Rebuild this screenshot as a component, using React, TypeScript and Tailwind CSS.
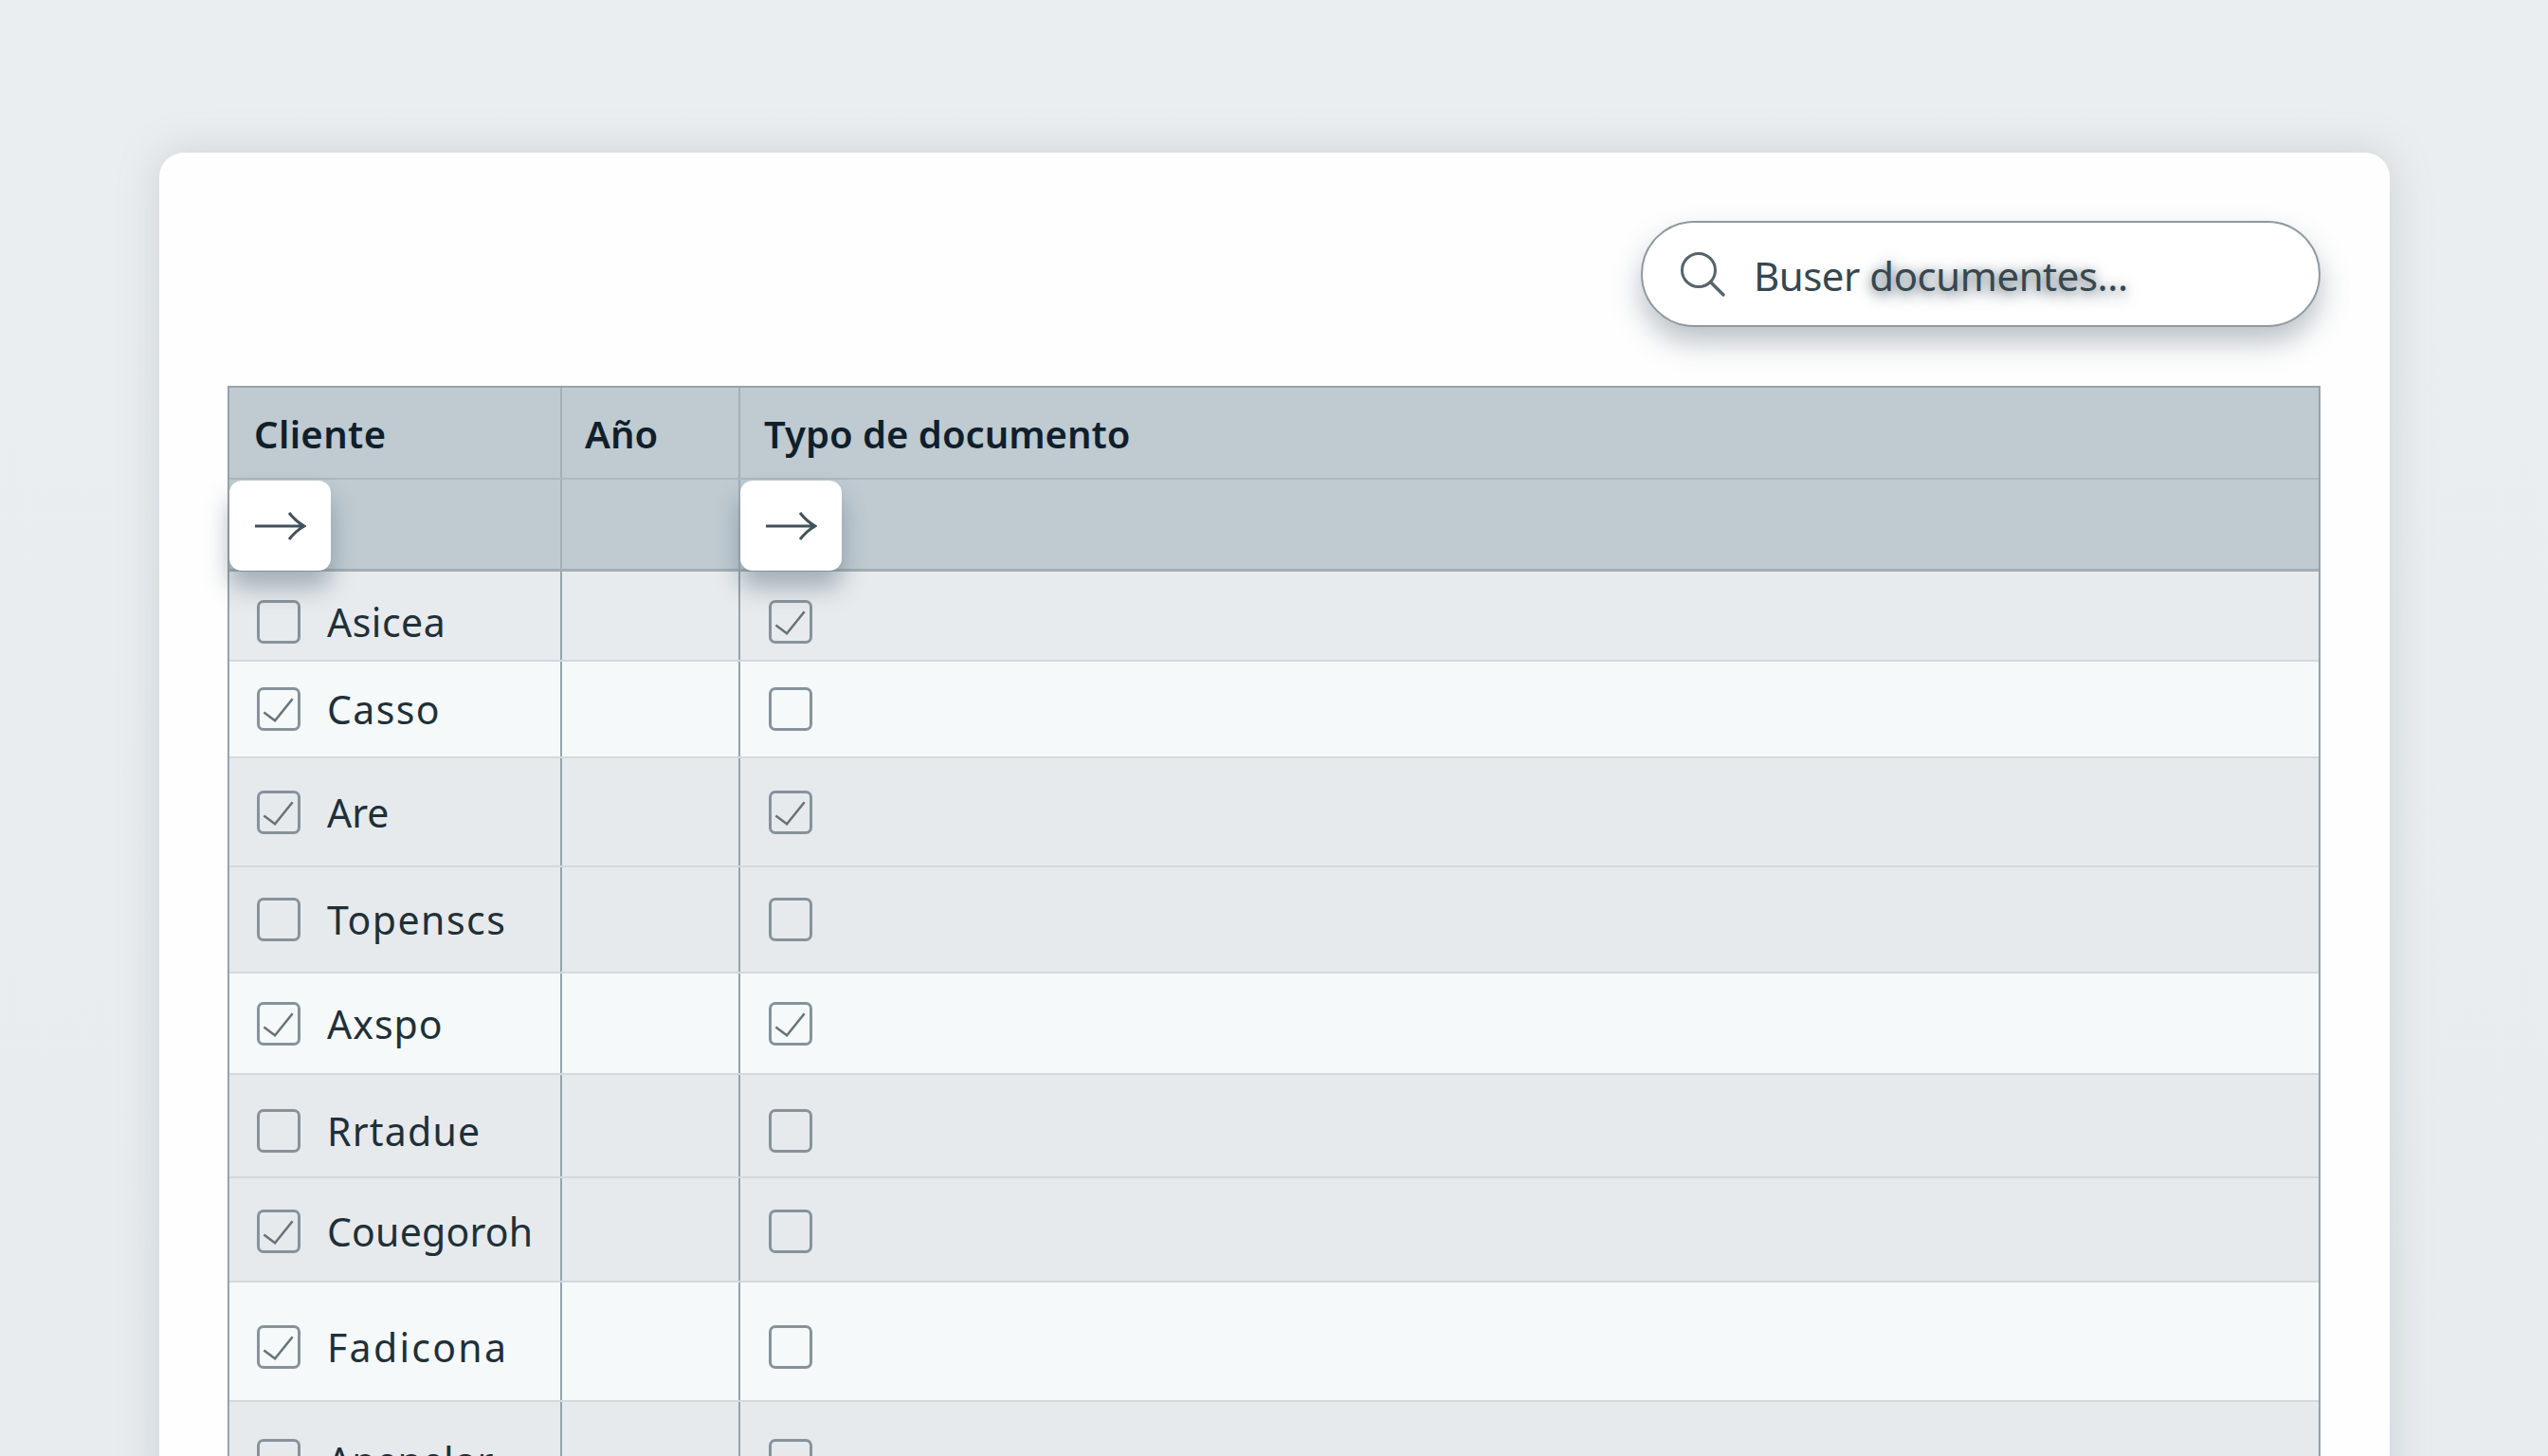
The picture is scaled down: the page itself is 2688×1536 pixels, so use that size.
import React from "react";

type Row = {
  name: string;
  left: boolean;
  right: boolean;
  height: string;
  tone: string;
  offset: string;
  spacing: string;
};

const rows: Row[] = [
  { name: "Asicea", left: false, right: true, height: "h-[95px]", tone: "bg-[#e7ebee]", offset: "pt-[12px]", spacing: "tracking-[0.5px]" },
  { name: "Casso", left: true, right: false, height: "h-[102px]", tone: "bg-[#f5f9fa]", offset: "", spacing: "tracking-[1.4px]" },
  { name: "Are", left: true, right: true, height: "h-[115px]", tone: "bg-[#e6eaed]", offset: "", spacing: "tracking-normal" },
  { name: "Topenscs", left: false, right: false, height: "h-[112px]", tone: "bg-[#e6eaed]", offset: "", spacing: "tracking-[1.5px]" },
  { name: "Axspo", left: true, right: true, height: "h-[107px]", tone: "bg-[#f5f9fa]", offset: "", spacing: "tracking-[1px]" },
  { name: "Rrtadue", left: false, right: false, height: "h-[109px]", tone: "bg-[#e6eaed]", offset: "pt-[10px]", spacing: "tracking-[1.2px]" },
  { name: "Couegoroh", left: true, right: false, height: "h-[110px]", tone: "bg-[#e6eaed]", offset: "pt-[4px]", spacing: "tracking-[0.2px]" },
  { name: "Fadicona", left: true, right: false, height: "h-[126px]", tone: "bg-[#f5f9fa]", offset: "pt-[12px]", spacing: "tracking-[2.3px]" },
  { name: "Apenelor", left: false, right: false, height: "h-[126px]", tone: "bg-[#e6eaed]", offset: "", spacing: "tracking-normal" },
];

const Checkbox = ({ checked }: { checked: boolean }) => (
  <span className="flex h-[46px] w-[46px] shrink-0 items-center justify-center rounded-[7px] border-[3px] border-[#87929a]">
    {checked && (
      <svg width="40" height="40" viewBox="0 0 41 41" fill="none" className="shrink-0">
        <path d="M4.5 24 L16.5 33 L35.5 9.5" stroke="#687379" strokeWidth="2.6" />
      </svg>
    )}
  </span>
);

const ArrowButton = () => (
  <div className="relative z-10 mt-px flex h-[95px] w-[107px] items-center justify-center rounded-[13px] bg-white shadow-[0_18px_26px_rgba(70,90,105,0.42)]">
    <svg width="54" height="30" viewBox="0 0 54 30" fill="none">
      <path d="M0 15 H52 M36 1 Q43 10 52 15 Q43 20 36 29" stroke="#42525a" strokeWidth="3" />
    </svg>
  </div>
);

export default function App() {
  return (
    <div className="h-[1536px] w-[2688px] overflow-hidden bg-gradient-to-b from-[#ebeef0] to-[#e8ecef] pl-[168px] pr-[167px] pt-[161px] font-['Noto_Sans',sans-serif]">
      <div className="h-[1500px] rounded-[26px] bg-[#fefefe] pl-[72px] pr-[73px] pt-[72px] shadow-[0_0_44px_rgba(120,135,150,0.28)]">
        {/* Search */}
        <div className="mb-[62px] flex justify-end">
          <div className="flex h-[112px] w-[717px] items-center rounded-full border-2 border-[#8f999f] bg-white pl-[39px] shadow-[0_16px_30px_rgba(90,110,125,0.42)]">
            <svg width="48" height="48" viewBox="0 0 48 48" fill="none" className="shrink-0">
              <circle cx="20" cy="20" r="17.5" stroke="#56646c" strokeWidth="3" />
              <path d="M32.5 32.5 L46 46" stroke="#56646c" strokeWidth="3.4" strokeLinecap="round" />
            </svg>
            <span className="ml-[30px] mt-[2px] text-[42px] tracking-[-0.5px] text-[#37474f]">
              Buser{" "}
              <span className="[text-shadow:0_4px_16px_rgba(60,80,95,0.75),0_2px_8px_rgba(60,80,95,0.35)]">documentes...</span>
            </span>
          </div>
        </div>

        {/* Table */}
        <div className="border-x-2 border-t-2 border-[#98a3a9]">
          <div className="grid h-[97px] grid-cols-[351px_188px_1fr] border-b-2 border-[#adb8bf] bg-[#bfcad1] text-[40px] font-semibold text-[#101f2b]">
            <div className="flex items-center border-r-2 border-[#a3aeb5] pl-[26px] pt-[3px] tracking-[0.4px]">Cliente</div>
            <div className="flex items-center border-r-2 border-[#a3aeb5] pl-[24px] pt-[3px]">Año</div>
            <div className="flex items-center pl-[25px] pt-[3px]">Typo de documento</div>
          </div>
          <div className="grid h-[97px] grid-cols-[351px_188px_1fr] border-b-[3px] border-[#a3aeb5] bg-[#bfcad1]">
            <div className="border-r-2 border-[#a3aeb5]">
              <ArrowButton />
            </div>
            <div className="border-r-2 border-[#a3aeb5]" />
            <div>
              <ArrowButton />
            </div>
          </div>

          {rows.map((row) => (
            <div
              key={row.name}
              className={`grid grid-cols-[351px_188px_1fr] border-b-2 border-[#d3d9dd] ${row.height} ${row.tone}`}
            >
              <div className={`flex items-center border-r-2 border-[#98a3a9] pl-[29px] text-[41px] text-[#1f3038] ${row.offset}`}>
                <Checkbox checked={row.left} />
                <span className={`ml-[28px] mt-[2px] ${row.spacing}`}>{row.name}</span>
              </div>
              <div className="border-r-2 border-[#98a3a9]" />
              <div className={`flex items-center pl-[30px] ${row.offset}`}>
                <Checkbox checked={row.right} />
              </div>
            </div>
          ))}
        </div>
      </div>
    </div>
  );
}
